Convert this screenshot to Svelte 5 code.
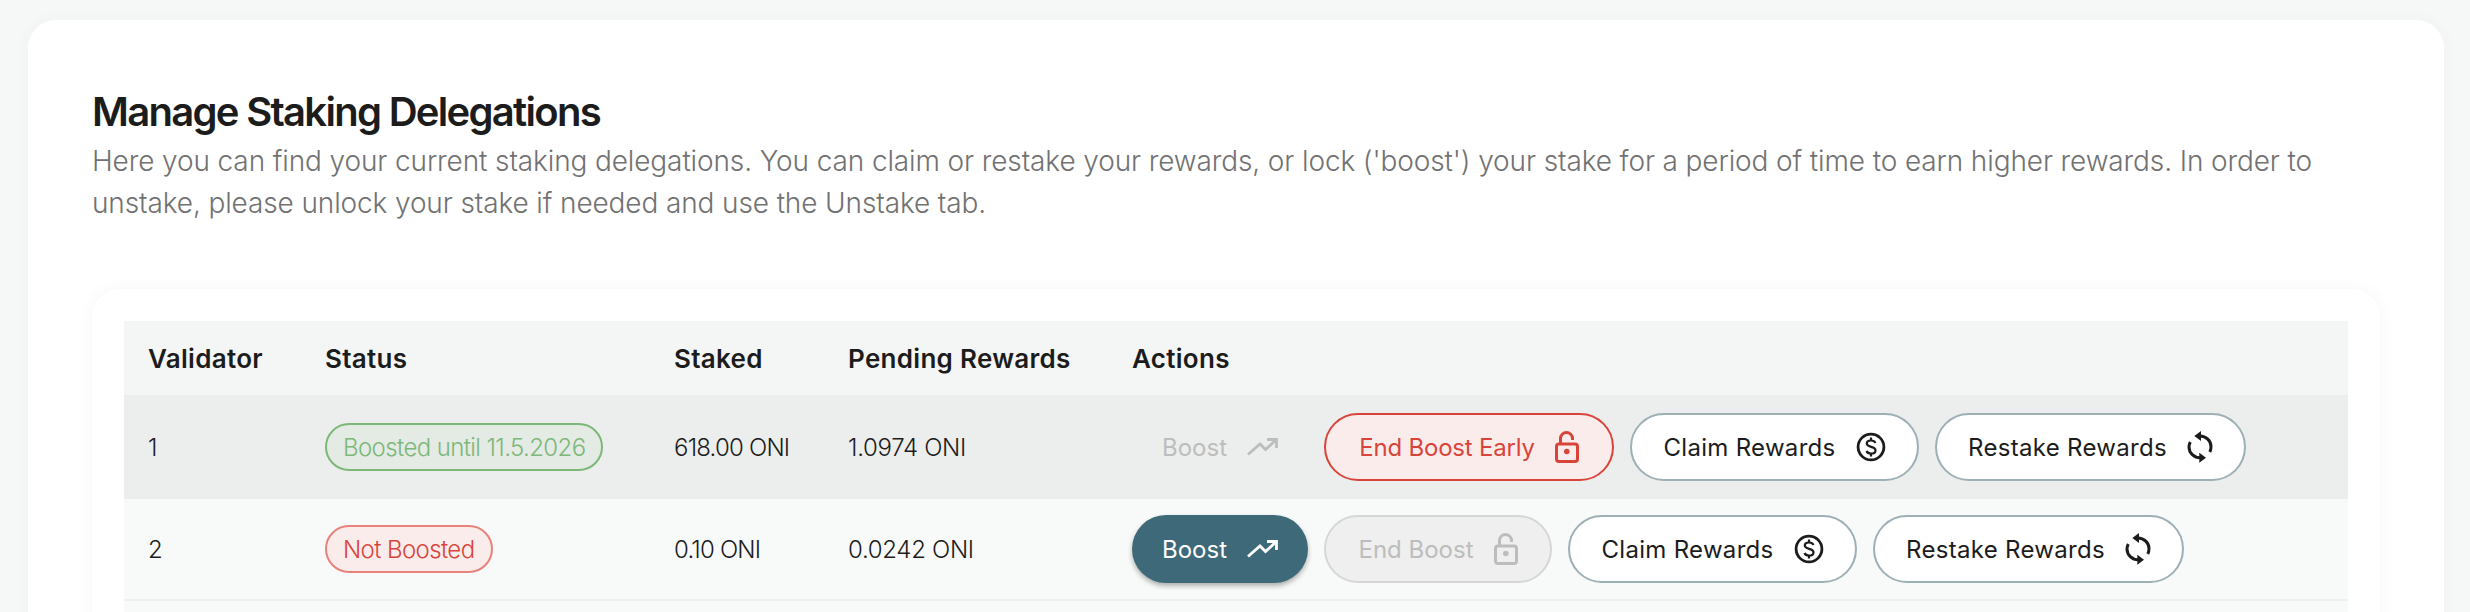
<script>
  const rows = [
    {
      id: 1,
      status: 'Boosted until 11.5.2026',
      boosted: true,
      staked: '618.00 ONI',
      pending: '1.0974 ONI'
    },
    {
      id: 2,
      status: 'Not Boosted',
      boosted: false,
      staked: '0.10 ONI',
      pending: '0.0242 ONI'
    }
  ];
</script>

{#snippet trendIcon()}
  <svg class="icon trend" viewBox="0 0 31 18" fill="none" stroke="currentColor" stroke-width="2.8">
    <path d="M1 16.5 L13 6 L18.5 11.5 L29 2" />
    <path d="M20 1.5 H29.5 V10" />
  </svg>
{/snippet}

{#snippet lockIcon()}
  <svg class="icon lock" viewBox="0 0 24 32" fill="none" stroke="currentColor" stroke-width="3">
    <path d="M5.5 12 V7.5 A6 6 0 0 1 17.5 7.5 V9" />
    <rect x="1.5" y="13" width="21" height="17.5" rx="2.5" />
    <circle cx="11.8" cy="20.5" r="2.8" fill="currentColor" stroke="none" />
  </svg>
{/snippet}

{#snippet dollarIcon()}
  <svg class="icon dollar" viewBox="0 0 30 30" fill="none" stroke="currentColor" stroke-width="2.8">
    <circle cx="15" cy="15" r="12.9" />
    <path d="M19.4 11 C18.8 9.3 17 8.5 15 8.5 C12.6 8.5 10.8 9.7 10.8 11.6 C10.8 16 19.5 13.8 19.5 18.4 C19.5 20.4 17.6 21.5 15 21.5 C12.8 21.5 11.1 20.6 10.5 19" stroke-width="2.2" />
    <path d="M15 5.5 V8.5 M15 21.5 V24.5" stroke-width="2.2" />
  </svg>
{/snippet}

{#snippet syncIcon()}
  <svg class="icon sync" viewBox="0 0 26 34" fill="none" stroke="currentColor" stroke-width="3">
    <path d="M13 6 C19 6 24 11 24 16.5 C24 18.5 23.5 20.5 22.8 22" />
    <path d="M13.3 27.7 C7 27.7 2 23 2 17 C2 15.5 2.5 13.5 3.3 12" />
    <path d="M14 1 L7.3 6 L14 11 Z" fill="currentColor" stroke="none" />
    <path d="M12.3 22.7 L19 27.7 L12.3 32.7 Z" fill="currentColor" stroke="none" />
  </svg>
{/snippet}

<div class="page">
  <section class="card">
    <h1>Manage Staking Delegations</h1>
    <p class="lead">
      Here you can find your current staking delegations. You can claim or restake your rewards, or lock ('boost') your stake for a period of time to earn higher rewards. In order to unstake, please unlock your stake if needed and use the Unstake tab.
    </p>

    <div class="table-card">
      <table>
        <colgroup>
          <col class="c-validator" />
          <col class="c-status" />
          <col class="c-staked" />
          <col class="c-pending" />
          <col />
        </colgroup>
        <thead>
          <tr>
            <th>Validator</th>
            <th>Status</th>
            <th>Staked</th>
            <th>Pending Rewards</th>
            <th>Actions</th>
          </tr>
        </thead>
        <tbody>
          {#each rows as row}
            <tr class:active={row.boosted}>
              <td>{row.id}</td>
              <td>
                <span class="pill" class:green={row.boosted} class:red={!row.boosted}>{row.status}</span>
              </td>
              <td class="staked">{row.staked}</td>
              <td>{row.pending}</td>
              <td>
                <div class="actions">
                  {#if row.boosted}
                    <button class="btn ghost" disabled>Boost {@render trendIcon()}</button>
                    <button class="btn danger">End Boost Early {@render lockIcon()}</button>
                  {:else}
                    <button class="btn primary">Boost {@render trendIcon()}</button>
                    <button class="btn off" disabled>End Boost {@render lockIcon()}</button>
                  {/if}
                  <button class="btn outline claim">Claim Rewards {@render dollarIcon()}</button>
                  <button class="btn outline restake">Restake Rewards {@render syncIcon()}</button>
                </div>
              </td>
            </tr>
          {/each}
          <tr class="spacer"><td colspan="5"></td></tr>
        </tbody>
      </table>
    </div>
  </section>
</div>

<style>
  :global(body) {
    margin: 0;
    background: #f6f8f7;
    font-family: Inter, "Liberation Sans", sans-serif;
  }

  .page {
    height: 612px;
    overflow: hidden;
    padding: 20px 26px 0 28px;
    box-sizing: border-box;
  }

  .card {
    background: #fff;
    border-radius: 28px;
    padding: 63px 64px 0 64px;
    box-shadow: 0 0 16px rgba(60, 80, 80, 0.04);
    height: 700px;
    box-sizing: border-box;
  }

  h1 {
    margin: 0;
    font-size: 40px;
    line-height: 57px;
    font-weight: 600;
    letter-spacing: -1.7px;
    color: #1c1c1c;
  }

  .lead {
    margin: 0;
    font-size: 28px;
    line-height: 42px;
    font-weight: 300;
    letter-spacing: -0.12px;
    color: #727272;
  }

  .table-card {
    margin: 65px 0 0 0;
    padding: 32px;
    border-radius: 28px;
    background: #fff;
    box-shadow: 0 0 16px rgba(60, 80, 80, 0.05);
  }

  table {
    width: 100%;
    border-collapse: collapse;
    table-layout: fixed;
    color: #1c1c1c;
  }

  .c-validator { width: 177px; }
  .c-status { width: 349px; }
  .c-staked { width: 174px; }
  .c-pending { width: 284px; }

  th {
    height: 74px;
    padding: 0 24px;
    background: #f4f6f5;
    text-align: left;
    font-size: 26px;
    font-weight: 600;
    letter-spacing: 0.3px;
  }

  td {
    padding: 0 24px;
    background: #f8faf9;
    font-size: 24px;
    font-weight: 300;
    letter-spacing: -0.3px;
    height: 100px;
    border-bottom: 2px solid #f0f2f1;
    box-sizing: content-box;
  }

  td.staked {
    letter-spacing: -0.8px;
  }

  tr.active td {
    background: #eceeed;
    height: 104px;
    border-bottom: 0;
  }

  tr.spacer td {
    height: 40px;
    border: 0;
  }

  .pill {
    display: inline-flex;
    align-items: center;
    height: 48px;
    padding: 0 16px;
    box-sizing: border-box;
    border-radius: 24px;
    border: 2px solid;
    font-size: 24px;
    font-weight: 300;
    letter-spacing: -0.6px;
  }

  .green {
    color: #7cb878;
    border-color: #7cb878;
    background: #e4eae4;
  }

  .red {
    color: #d9443a;
    border-color: #e8827a;
    background: #fbecec;
  }

  .actions {
    display: flex;
    gap: 16px;
    align-items: center;
  }

  .btn {
    display: inline-flex;
    align-items: center;
    justify-content: center;
    gap: 20px;
    height: 68px;
    padding: 0;
    box-sizing: border-box;
    border-radius: 34px;
    border: 2px solid transparent;
    background: transparent;
    font: inherit;
    font-size: 24px;
    font-weight: 400;
    white-space: nowrap;
  }

  .ghost {
    color: #bdbdbd;
    width: 176px;
  }

  .primary {
    width: 176px;
    background: #3d6978;
    color: #fff;
    box-shadow: 0 3px 5px rgba(0, 0, 0, 0.3);
  }

  .danger {
    width: 290px;
    color: #d9443a;
    border-color: #d9443a;
    background: #fbecec;
    letter-spacing: -0.2px;
  }

  .off {
    width: 228px;
    color: #bdbdbd;
    border-color: #d5d7d6;
    background: #eeefee;
  }

  .outline {
    color: #1c1c1c;
    border-color: #9cb0b6;
    background: #fff;
    letter-spacing: 0.3px;
  }

  .claim { width: 289px; }
  .restake { width: 311px; }

  .icon {
    flex-shrink: 0;
    display: block;
  }

  .trend { width: 31px; height: 18px; }
  .lock { width: 24px; height: 32px; }
  .dollar { width: 30px; height: 30px; }
  .sync { width: 26px; height: 34px; }
</style>
